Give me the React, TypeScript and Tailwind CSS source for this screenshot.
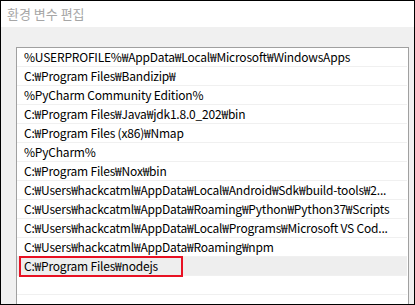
const paths = [
  '%USERPROFILE%₩AppData₩Local₩Microsoft₩WindowsApps',
  'C:₩Program Files₩Bandizip₩',
  '%PyCharm Community Edition%',
  'C:₩Program Files₩Java₩jdk1.8.0_202₩bin',
  'C:₩Program Files (x86)₩Nmap',
  '%PyCharm%',
  'C:₩Program Files₩Nox₩bin',
  'C:₩Users₩hackcatml₩AppData₩Local₩Android₩Sdk₩build-tools₩2...',
  'C:₩Users₩hackcatml₩AppData₩Roaming₩Python₩Python37₩Scripts',
  'C:₩Users₩hackcatml₩AppData₩Local₩Programs₩Microsoft VS Cod...',
  'C:₩Users₩hackcatml₩AppData₩Roaming₩npm',
  'C:₩Program Files₩nodejs',
  '',
];

const font = { fontFamily: '"Noto Sans CJK KR", "Noto Sans", sans-serif' };

export default function App() {
  return (
    <div
      className="flex h-[305px] w-[415px] flex-col overflow-hidden border border-black bg-[#f0f0f0]"
      style={font}
    >
      <div className="flex h-[26px] shrink-0 items-center bg-white pl-[6px] text-[13px] text-[#a6a6a6]">
        환경 변수 편집
      </div>

      <div className="flex flex-1 flex-col pl-[15px] pr-[5px] pt-[20px]">
        <div className="flex flex-1 flex-col border border-b-0 border-[#a0a0a0] bg-white pr-px">
          {paths.map((p, i) => {
            const selected = i === 11;
            return (
              <div
                key={i}
                className={`relative h-[19px] shrink-0 border-b border-[#f0f0f0] pl-[7px] text-[12px] leading-[18px] tracking-[-0.2px] whitespace-nowrap text-black ${
                  selected ? 'bg-[#eeeeee]' : ''
                }`}
              >
                {p}
                {selected && (
                  <span className="pointer-events-none absolute -top-px left-[2px] h-[21px] w-[164px] border-2 border-[#e81123]" />
                )}
              </div>
            );
          })}
        </div>
      </div>
    </div>
  );
}
